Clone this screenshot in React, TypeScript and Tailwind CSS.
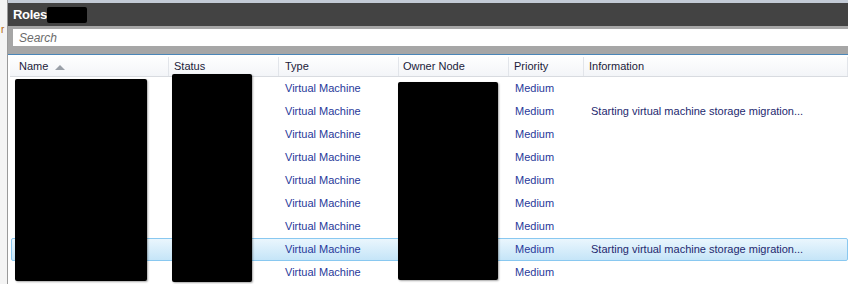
import React from "react";

const cols = [
  { label: "Name", w: "w-[159px]", pl: "pl-[9px]", sort: true },
  { label: "Status", w: "w-[110px]", pl: "pl-[5px]" },
  { label: "Type", w: "w-[120px]", pl: "pl-[6px]" },
  { label: "Owner Node", w: "w-[110px]", pl: "pl-[4px]" },
  { label: "Priority", w: "w-[75px]", pl: "pl-[5px]" },
  { label: "Information", w: "flex-1", pl: "pl-[5px]" },
];

const infos = ["", "Starting virtual machine storage migration...", "", "", "", "", "", "Starting virtual machine storage migration...", ""];

export default function App() {
  return (
    <div
      className="relative w-[848px] h-[284px] overflow-hidden bg-white flex"
      style={{ fontFamily: '"Liberation Sans", Arial, sans-serif' }}
    >
      {/* left strip */}
      <div className="w-[8px] bg-[#f4f4f4] relative shrink-0 border-r border-[#9a9a9a]">
        <span className="absolute left-[1px] top-[25px] text-[10px] text-[#b4620a] leading-none">r</span>
      </div>
      <div className="flex-1 flex flex-col">
        <div className="h-[3px] bg-[#c3cbd6]" />
        <div className="h-[23px] bg-[#434343] flex items-center pl-[5px]">
          <span className="text-white font-bold text-[13px] leading-none tracking-[-0.3px]">Roles</span>
          <span className="w-[40px] h-[16px] bg-black rounded-[2px]" />
        </div>
        <div className="bg-[#a6a6a6] pt-[3px] pb-[8px] pl-[5px]">
          <div className="h-[17px] bg-white flex items-center pl-[6px]">
            <span className="italic text-[12px] text-[#6b6b6b] leading-none">Search</span>
          </div>
        </div>
        <div className="h-[1px] bg-[#4a86b8]" />
        <div className="flex-1 bg-white pl-[2px] flex flex-col">
          <div className="h-[22px] pt-[2px] flex bg-gradient-to-b from-white to-[#f3f5f8] border-b border-[#d8dbe0]">
            {cols.map((c) => (
              <div
                key={c.label}
                className={`${c.w} ${c.pl} flex items-center border-r border-[#e2e5ea] text-[11px] text-[#1b1b3a] shrink-0`}
              >
                {c.label}
                {c.sort && (
                  <svg width="10" height="6" viewBox="0 0 10 6" className="ml-[7px]">
                    <path d="M0 6 L5 1 L10 6 Z" fill="#9aa0a8" />
                  </svg>
                )}
              </div>
            ))}
          </div>
          {infos.map((info, i) => {
            const sel = i === 7;
            return (
              <div
                key={i}
                className={`h-[23px] ml-[1px] flex items-center text-[11px] text-[#28399a] ${
                  sel
                    ? "bg-gradient-to-b from-[#eaf6fd] to-[#c5e5f8] border border-[#89c8f0] rounded-[2px]"
                    : "border border-transparent"
                }`}
              >
                <div className="w-[158px] shrink-0" />
                <div className="w-[110px] shrink-0" />
                <div className="w-[120px] shrink-0 pl-[5px]">Virtual Machine</div>
                <div className="w-[110px] shrink-0" />
                <div className="w-[75px] shrink-0 pl-[5px]">Medium</div>
                <div className="flex-1 pl-[6px] whitespace-nowrap text-[#24296f]">{info}</div>
              </div>
            );
          })}
        </div>
      </div>
      {/* redaction boxes */}
      <div className="absolute left-[15px] top-[79px] w-[132px] h-[202px] bg-black rounded-[2px] shadow-[1px_1px_2px_rgba(0,0,0,0.35)]" />
      <div className="absolute left-[172px] top-[74px] w-[80px] h-[208px] bg-black rounded-[2px] shadow-[1px_1px_2px_rgba(0,0,0,0.35)]" />
      <div className="absolute left-[398px] top-[82px] w-[100px] h-[198px] bg-black rounded-[2px] shadow-[1px_1px_2px_rgba(0,0,0,0.35)]" />
    </div>
  );
}
